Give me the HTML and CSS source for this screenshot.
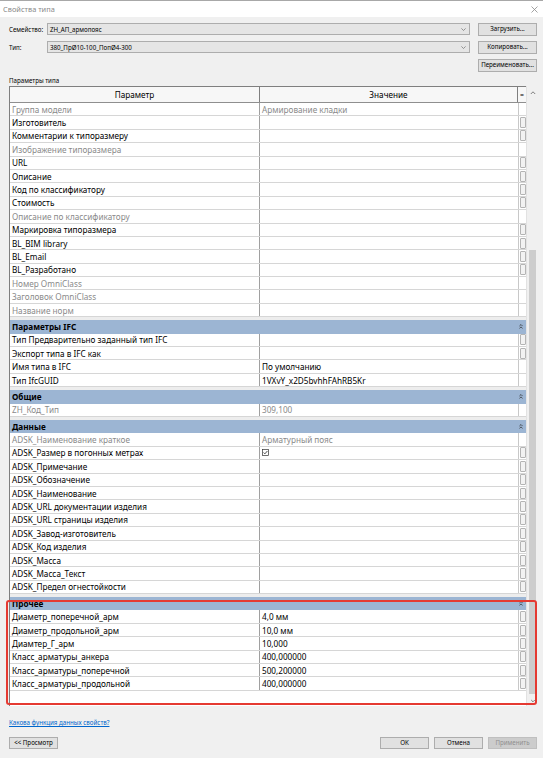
FILE: index.html
```html
<!DOCTYPE html>
<html lang="ru">
<head>
<meta charset="utf-8">
<title>Свойства типа</title>
<link rel="stylesheet" href="styles.css">
</head>
<body>
<div class="window">
  <header class="titlebar">
    <span class="title">Свойства типа</span>
    <svg class="close" width="7" height="7" viewBox="0 0 7 7"><path d="M0.5 0.5 L6.5 6.5 M6.5 0.5 L0.5 6.5" stroke="#8c8c8c" stroke-width="0.8" fill="none"/></svg>
  </header>

  <main class="content">
    <div class="type-select">
      <div class="fields">
        <div class="field">
          <span class="field-label">Семейство:</span>
          <div class="combo"><span>ZH_АП_армопояс</span><svg class="chev" width="5" height="3" viewBox="0 0 5 3"><path d="M0.4 0.4 L2.5 2.5 L4.6 0.4" stroke="#707070" stroke-width="0.7" fill="none"/></svg></div>
        </div>
        <div class="field">
          <span class="field-label">Тип:</span>
          <div class="combo"><span>380_ПрØ10-100_ПопØ4-300</span><svg class="chev" width="5" height="3" viewBox="0 0 5 3"><path d="M0.4 0.4 L2.5 2.5 L4.6 0.4" stroke="#707070" stroke-width="0.7" fill="none"/></svg></div>
        </div>
      </div>
      <div class="side-buttons">
        <button class="btn">Загрузить...</button>
        <button class="btn">Копировать...</button>
        <button class="btn">Переименовать...</button>
      </div>
    </div>

    <div class="caption">Параметры типа</div>

    <div class="grid-frame">
      <div class="grid">
        <div class="grid-head">
          <div class="hcell">Параметр</div>
          <div class="hcell">Значение</div>
          <div class="hcell eq-head">=</div>
        </div>
        <div class="grid-body">
          <div class="row ro"><div class="c-name">Группа модели</div><div class="c-val">Армирование кладки</div><div class="c-eq"></div></div>
          <div class="row"><div class="c-name">Изготовитель</div><div class="c-val"></div><div class="c-eq"><i class="eq-btn"></i></div></div>
          <div class="row"><div class="c-name">Комментарии к типоразмеру</div><div class="c-val"></div><div class="c-eq"><i class="eq-btn"></i></div></div>
          <div class="row ro"><div class="c-name">Изображение типоразмера</div><div class="c-val"></div><div class="c-eq"></div></div>
          <div class="row"><div class="c-name">URL</div><div class="c-val"></div><div class="c-eq"><i class="eq-btn"></i></div></div>
          <div class="row"><div class="c-name">Описание</div><div class="c-val"></div><div class="c-eq"><i class="eq-btn"></i></div></div>
          <div class="row"><div class="c-name">Код по классификатору</div><div class="c-val"></div><div class="c-eq"><i class="eq-btn"></i></div></div>
          <div class="row"><div class="c-name">Стоимость</div><div class="c-val"></div><div class="c-eq"><i class="eq-btn"></i></div></div>
          <div class="row ro"><div class="c-name">Описание по классификатору</div><div class="c-val"></div><div class="c-eq"></div></div>
          <div class="row"><div class="c-name">Маркировка типоразмера</div><div class="c-val"></div><div class="c-eq"><i class="eq-btn"></i></div></div>
          <div class="row"><div class="c-name">BL_BIM library</div><div class="c-val"></div><div class="c-eq"><i class="eq-btn"></i></div></div>
          <div class="row"><div class="c-name">BL_Email</div><div class="c-val"></div><div class="c-eq"><i class="eq-btn"></i></div></div>
          <div class="row"><div class="c-name">BL_Разработано</div><div class="c-val"></div><div class="c-eq"><i class="eq-btn"></i></div></div>
          <div class="row ro"><div class="c-name">Номер OmniClass</div><div class="c-val"></div><div class="c-eq"></div></div>
          <div class="row ro"><div class="c-name">Заголовок OmniClass</div><div class="c-val"></div><div class="c-eq"></div></div>
          <div class="row ro"><div class="c-name">Название норм</div><div class="c-val"></div><div class="c-eq"></div></div>

          <div class="group"><span>Параметры IFC</span><svg class="collapse" width="4" height="5" viewBox="0 0 4 5"><path d="M0.4 2.1 L2 0.5 L3.6 2.1 M0.4 4.5 L2 2.9 L3.6 4.5" stroke="#2a2a2a" stroke-width="0.7" fill="none"/></svg></div>
          <div class="row"><div class="c-name">Тип Предварительно заданный тип IFC</div><div class="c-val"></div><div class="c-eq"><i class="eq-btn"></i></div></div>
          <div class="row"><div class="c-name">Экспорт типа в IFC как</div><div class="c-val"></div><div class="c-eq"><i class="eq-btn"></i></div></div>
          <div class="row"><div class="c-name">Имя типа в IFC</div><div class="c-val">По умолчанию</div><div class="c-eq"></div></div>
          <div class="row"><div class="c-name">Тип IfcGUID</div><div class="c-val">1VXvY_x2D5bvhhFAhRB5Kr</div><div class="c-eq"></div></div>

          <div class="group"><span>Общие</span><svg class="collapse" width="4" height="5" viewBox="0 0 4 5"><path d="M0.4 2.1 L2 0.5 L3.6 2.1 M0.4 4.5 L2 2.9 L3.6 4.5" stroke="#2a2a2a" stroke-width="0.7" fill="none"/></svg></div>
          <div class="row ro"><div class="c-name">ZH_Код_Тип</div><div class="c-val">309,100</div><div class="c-eq"></div></div>

          <div class="group"><span>Данные</span><svg class="collapse" width="4" height="5" viewBox="0 0 4 5"><path d="M0.4 2.1 L2 0.5 L3.6 2.1 M0.4 4.5 L2 2.9 L3.6 4.5" stroke="#2a2a2a" stroke-width="0.7" fill="none"/></svg></div>
          <div class="row ro"><div class="c-name">ADSK_Наименование краткое</div><div class="c-val">Арматурный пояс</div><div class="c-eq"></div></div>
          <div class="row"><div class="c-name">ADSK_Размер в погонных метрах</div><div class="c-val"><svg class="check" width="7" height="7" viewBox="0 0 7 7"><rect x="0.5" y="0.5" width="6" height="6" fill="#fff" stroke="#333" stroke-width="0.7"/><path d="M1.6 3.5 L2.9 4.8 L5.4 2" stroke="#222" stroke-width="0.8" fill="none"/></svg></div><div class="c-eq"><i class="eq-btn"></i></div></div>
          <div class="row"><div class="c-name">ADSK_Примечание</div><div class="c-val"></div><div class="c-eq"><i class="eq-btn"></i></div></div>
          <div class="row"><div class="c-name">ADSK_Обозначение</div><div class="c-val"></div><div class="c-eq"><i class="eq-btn"></i></div></div>
          <div class="row"><div class="c-name">ADSK_Наименование</div><div class="c-val"></div><div class="c-eq"><i class="eq-btn"></i></div></div>
          <div class="row"><div class="c-name">ADSK_URL документации изделия</div><div class="c-val"></div><div class="c-eq"><i class="eq-btn"></i></div></div>
          <div class="row"><div class="c-name">ADSK_URL страницы изделия</div><div class="c-val"></div><div class="c-eq"><i class="eq-btn"></i></div></div>
          <div class="row"><div class="c-name">ADSK_Завод-изготовитель</div><div class="c-val"></div><div class="c-eq"><i class="eq-btn"></i></div></div>
          <div class="row"><div class="c-name">ADSK_Код изделия</div><div class="c-val"></div><div class="c-eq"><i class="eq-btn"></i></div></div>
          <div class="row"><div class="c-name">ADSK_Масса</div><div class="c-val"></div><div class="c-eq"><i class="eq-btn"></i></div></div>
          <div class="row"><div class="c-name">ADSK_Масса_Текст</div><div class="c-val"></div><div class="c-eq"><i class="eq-btn"></i></div></div>
          <div class="row"><div class="c-name">ADSK_Предел огнестойкости</div><div class="c-val"></div><div class="c-eq"><i class="eq-btn"></i></div></div>

          <div class="group"><span>Прочее</span><svg class="collapse" width="4" height="5" viewBox="0 0 4 5"><path d="M0.4 2.1 L2 0.5 L3.6 2.1 M0.4 4.5 L2 2.9 L3.6 4.5" stroke="#2a2a2a" stroke-width="0.7" fill="none"/></svg></div>
          <div class="row"><div class="c-name">Диаметр_поперечной_арм</div><div class="c-val">4,0 мм</div><div class="c-eq"><i class="eq-btn"></i></div></div>
          <div class="row"><div class="c-name">Диаметр_продольной_арм</div><div class="c-val">10,0 мм</div><div class="c-eq"><i class="eq-btn"></i></div></div>
          <div class="row"><div class="c-name">Диамтер_Г_арм</div><div class="c-val">10,000</div><div class="c-eq"><i class="eq-btn"></i></div></div>
          <div class="row"><div class="c-name">Класс_арматуры_анкера</div><div class="c-val">400,000000</div><div class="c-eq"><i class="eq-btn"></i></div></div>
          <div class="row"><div class="c-name">Класс_арматуры_поперечной</div><div class="c-val">500,200000</div><div class="c-eq"><i class="eq-btn"></i></div></div>
          <div class="row"><div class="c-name">Класс_арматуры_продольной</div><div class="c-val">400,000000</div><div class="c-eq"><i class="eq-btn"></i></div></div>
          <div class="filler"></div>
        </div>
      </div>
      <div class="vscroll">
        <svg class="arrow" width="12" height="14" viewBox="0 0 12 14"><path d="M3.8 8 L6 5.8 L8.2 8" stroke="#606060" stroke-width="0.8" fill="none"/></svg>
        <div class="track"><div class="thumb"></div></div>
        <svg class="arrow" width="12" height="10" viewBox="0 0 12 10"><path d="M4.2 4 L6 5.8 L7.8 4" stroke="#606060" stroke-width="0.8" fill="none"/></svg>
      </div>
    </div>

    <a class="help-link" href="#">Какова функция данных свойств?</a>

    <div class="footer">
      <button class="btn wide">&lt;&lt; Просмотр</button>
      <div class="footer-right">
        <button class="btn wide">OK</button>
        <button class="btn wide">Отмена</button>
        <button class="btn wide" disabled>Применить</button>
      </div>
    </div>
  </main>

  <div class="highlight"></div>
</div>
</body>
</html>
```

FILE: styles.css
```css
* { box-sizing: border-box; }

html, body {
  margin: 0;
  padding: 0;
}

body {
  width: 543px;
  height: 758px;
  overflow: hidden;
  background: #f0f0f0;
  font-family: "Noto Sans", "Open Sans", sans-serif;
  color: #000;
}

.window {
  position: relative;
  width: 543px;
  height: 758px;
  background: #f0f0f0;
}

/* title bar */
.titlebar {
  height: 17px;
  background: #fff;
  border-top: 1px solid #a8a8a8;
  display: flex;
  align-items: center;
  justify-content: space-between;
  padding: 0 5px 0 3px;
}

.title {
  font-size: 7.4px;
  color: #8a8a8a;
}

/* family / type selectors */
.content {
  padding: 6px 5px 0 9px;
}

.type-select {
  display: flex;
}

.fields {
  flex: 1;
  display: flex;
  flex-direction: column;
  gap: 6px;
}

.field {
  display: flex;
  align-items: center;
  height: 12px;
}

.field-label {
  width: 38px;
  font-size: 6.2px;
}

.combo {
  flex: 1;
  height: 12px;
  background: #e5e5e5;
  border: 1px solid #adadad;
  display: flex;
  align-items: center;
  justify-content: space-between;
  padding: 0 3px 0 2px;
  font-size: 6.2px;
}

.side-buttons {
  width: 59px;
  margin-left: 8px;
  margin-right: 1px;
  display: flex;
  flex-direction: column;
  gap: 5px;
}

.btn {
  height: 13px;
  padding: 0;
  background: #e1e1e1;
  border: 1px solid #adadad;
  border-radius: 0;
  font-family: inherit;
  font-size: 6.2px;
  color: #000;
  line-height: 1;
}

.btn:disabled {
  background: #cccccc;
  border-color: #bfbfbf;
  color: #8f8f8f;
}

.caption {
  margin-top: 5px;
  height: 8px;
  line-height: 8px;
  font-size: 6.2px;
}

/* parameter grid */
.grid-frame {
  margin-top: 1px;
  height: 620px;
  display: flex;
}

.grid {
  width: 517px;
  display: flex;
  flex-direction: column;
  border-left: 1px solid #7f7f7f;
}

.grid-head {
  flex: none;
  height: 17px;
  display: grid;
  grid-template-columns: 250px 1fr 8px;
  border-top: 1px solid #7f7f7f;
  border-bottom: 1px solid #8f8f8f;
  background: #f7f7f7;
}

.hcell {
  display: flex;
  align-items: center;
  justify-content: center;
  font-size: 8.2px;
  border-right: 1px solid #7f7f7f;
}

.eq-head {
  font-size: 7px;
  border-right: 0;
  border-left: 0;
}

.grid-body {
  flex: 1;
  display: flex;
  flex-direction: column;
  background: #fff;
  overflow: hidden;
}

.row {
  height: 13.4px;
  flex: none;
  display: grid;
  grid-template-columns: 250px 1fr 8px;
  border-bottom: 1px solid #d6d6d6;
  font-size: 8.2px;
}

.row > div {
  display: flex;
  align-items: center;
  white-space: nowrap;
  overflow: hidden;
}

.c-name {
  padding-left: 2px;
  border-right: 1px solid #a0a0a0;
}

.c-val {
  padding-left: 2px;
}

.c-eq {
  border-left: 1px solid #c8c8c8;
  justify-content: center;
}

.ro .c-name,
.ro .c-val {
  color: #8a8a8a;
}

.eq-btn {
  display: block;
  width: 6px;
  height: 11px;
  background: #f2f2f2;
  border: 1px solid #b4b4b4;
  border-radius: 1px;
}

.check {
  display: block;
}

.group {
  flex: none;
  height: 13.4px;
  margin-top: 3px;
  background: #9cb5d3;
  display: flex;
  align-items: center;
  justify-content: space-between;
  padding: 0 3px 0 2px;
  font-size: 8.2px;
  font-weight: 700;
}

.row + .group {
  box-shadow: 0 -3px 0 #ededed;
}

.filler {
  flex: 1;
  background: #fff;
}

/* vertical scroll bar */
.vscroll {
  width: 12px;
  display: flex;
  flex-direction: column;
  background: #f0f0f0;
  border-left: 1px solid #e2e2e2;
}

.arrow {
  display: block;
  flex: none;
}

.track {
  flex: 1;
  position: relative;
}

.thumb {
  position: absolute;
  left: 2px;
  right: 2px;
  top: 150px;
  bottom: 2px;
  background: #cdcdcd;
}

/* bottom area */
.help-link {
  display: block;
  margin-top: 13px;
  height: 8px;
  line-height: 8px;
  font-size: 6.2px;
  color: #0066cc;
  text-decoration: underline;
}

.footer {
  margin-top: 10px;
  display: flex;
  justify-content: space-between;
}

.footer .btn {
  height: 12px;
}

.wide {
  width: 49px;
}

.footer-right {
  display: flex;
  gap: 5px;
  margin-right: 1px;
}

/* red call-out frame around the "Прочее" block */
.highlight {
  position: absolute;
  left: 6px;
  top: 600px;
  width: 531px;
  height: 105px;
  border: 2px solid #e53a32;
  border-radius: 3px;
  pointer-events: none;
}
```
